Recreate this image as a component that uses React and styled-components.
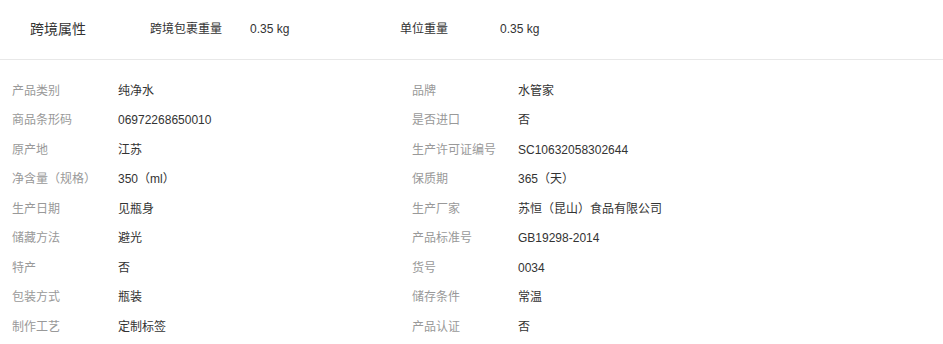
import styled, { createGlobalStyle } from "styled-components";

const GlobalStyle = createGlobalStyle`
  body {
    margin: 0;
    background: #ffffff;
    font-family: "Liberation Sans", "Noto Sans CJK SC", Arial, sans-serif;
  }
`;

const header = [
  { label: "跨境包裹重量", value: "0.35 kg" },
  { label: "单位重量", value: "0.35 kg" },
];

const props = [
  ["产品类别", "纯净水", "品牌", "水管家"],
  ["商品条形码", "06972268650010", "是否进口", "否"],
  ["原产地", "江苏", "生产许可证编号", "SC10632058302644"],
  ["净含量（规格）", "350（ml）", "保质期", "365（天）"],
  ["生产日期", "见瓶身", "生产厂家", "苏恒（昆山）食品有限公司"],
  ["储藏方法", "避光", "产品标准号", "GB19298-2014"],
  ["特产", "否", "货号", "0034"],
  ["包装方式", "瓶装", "储存条件", "常温"],
  ["制作工艺", "定制标签", "产品认证", "否"],
];

export default function App() {
  return (
    <>
      <GlobalStyle />
      <Wrap>
        <Header>
          <Title>跨境属性</Title>
          {header.map((h) => (
            <HeadPair key={h.label}>
              <HeadLabel>{h.label}</HeadLabel>
              <HeadValue>{h.value}</HeadValue>
            </HeadPair>
          ))}
        </Header>
        <List>
          {props.map((r) => (
            <Row key={r[0]}>
              <Cell>
                <Label>{r[0]}</Label>
                <Value>{r[1]}</Value>
              </Cell>
              <Cell>
                <Label>{r[2]}</Label>
                <Value>{r[3]}</Value>
              </Cell>
            </Row>
          ))}
        </List>
      </Wrap>
    </>
  );
}

const Wrap = styled.div`
  width: 943px;
`;

const Header = styled.div`
  display: flex;
  align-items: center;
  height: 60px;
  padding: 0 0 2px 30px;
  border-bottom: 1px solid #e8e8e8;
  box-sizing: border-box;
  line-height: 16px;
`;

const Title = styled.div`
  width: 120px;
  font-size: 14px;
  color: #333333;
`;

const HeadPair = styled.div`
  display: flex;
  width: 250px;
  font-size: 12px;
`;

const HeadLabel = styled.div`
  width: 100px;
  color: #333333;
`;

const HeadValue = styled.div`
  color: #333333;
`;

const List = styled.div`
  padding-top: 16px;
`;

const Row = styled.div`
  display: flex;
  height: 29.5px;
  align-items: center;
  font-size: 12px;
  line-height: 16px;
`;

const Cell = styled.div`
  display: flex;
  width: 400px;
  padding-left: 12px;
  box-sizing: border-box;
`;

const Label = styled.div`
  width: 106px;
  color: #999999;
`;

const Value = styled.div`
  color: #333333;
`;
